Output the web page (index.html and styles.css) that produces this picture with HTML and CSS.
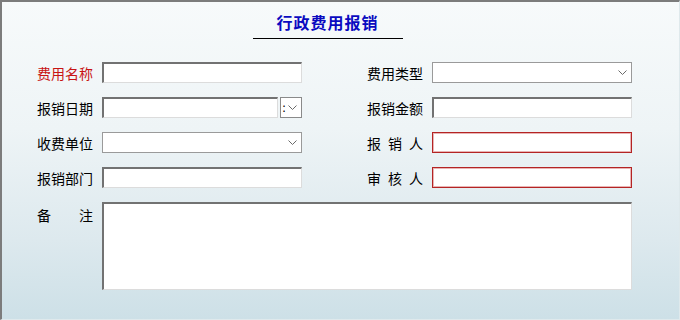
FILE: index.html
```html
<!DOCTYPE html>
<html lang="zh-CN">
<head>
  <meta charset="UTF-8" />
  <title>行政费用报销</title>
  <link rel="stylesheet" href="styles.css">
</head>
<body>
  <div class="panel">
    <div class="title-wrap">
      <h1 class="page-title">行政费用报销</h1>
    </div>

    <form class="expense-form">
      <label class="field-label required">费用名称</label>
      <input type="text" class="text-input" />
      <label class="field-label right">费用类型</label>
      <div class="select-box">
        <svg class="chevron" width="9" height="6" viewBox="0 0 9 6"><path d="M0.5 0.5 L4.5 4.5 L8.5 0.5" fill="none" stroke="#6a6a6a" stroke-width="1"/></svg>
      </div>

      <label class="field-label">报销日期</label>
      <div class="date-field">
        <input type="text" class="text-input date-input" />
        <div class="date-btn">
          <span class="colon">:</span>
          <svg width="9" height="6" viewBox="0 0 9 6"><path d="M0.5 0.5 L4.5 4.5 L8.5 0.5" fill="none" stroke="#6a6a6a" stroke-width="1"/></svg>
        </div>
      </div>
      <label class="field-label right">报销金额</label>
      <input type="text" class="text-input" />

      <label class="field-label">收费单位</label>
      <div class="select-box">
        <svg class="chevron" width="9" height="6" viewBox="0 0 9 6"><path d="M0.5 0.5 L4.5 4.5 L8.5 0.5" fill="none" stroke="#6a6a6a" stroke-width="1"/></svg>
      </div>
      <label class="field-label right spread">报销人</label>
      <input type="text" class="text-input must" />

      <label class="field-label">报销部门</label>
      <input type="text" class="text-input" />
      <label class="field-label right spread">审核人</label>
      <input type="text" class="text-input must" />

      <label class="field-label spread note-label">备注</label>
      <textarea class="text-input note"></textarea>
    </form>
  </div>
</body>
</html>
```

FILE: styles.css
```css
* {
  box-sizing: border-box;
}

body {
  margin: 0;
  font-family: "Noto Sans CJK SC", "Noto Sans", sans-serif;
  color: #000;
}

.panel {
  width: 680px;
  height: 320px;
  border-top: 2px solid #7c7c7c;
  border-left: 2px solid #7c7c7c;
  border-right: 1px solid #dfe9ec;
  border-bottom: 1px solid #dfe9ec;
  background: linear-gradient(to bottom, #f7fafb 0%, #eef4f6 40%, #dde9ee 75%, #cde0e7 100%);
  padding: 10px 0 0 35px;
}

.title-wrap {
  width: 595px;
  padding-right: 14px;
  display: flex;
  justify-content: center;
}

.page-title {
  margin: 0;
  width: 150px;
  font-size: 16px;
  line-height: 20px;
  font-weight: bold;
  letter-spacing: 1px;
  color: #0a0ac0;
  text-align: center;
  padding-bottom: 6px;
  border-bottom: 1px solid #000;
}

.expense-form {
  margin-top: 23px;
  display: grid;
  grid-template-columns: 56px 200px 112px 200px;
  grid-auto-rows: 21px;
  column-gap: 9px;
  row-gap: 14px;
}

.field-label {
  font-size: 14px;
  line-height: 21px;
  padding-top: 1px;
  white-space: nowrap;
}

.field-label.required {
  color: #c81414;
}

.field-label.right {
  justify-self: end;
  width: 56px;
}

.field-label.spread {
  text-align: justify;
  text-align-last: justify;
}

.text-input {
  width: 100%;
  height: 21px;
  margin: 0;
  background: #fff;
  border-top: 2px solid #727272;
  border-left: 2px solid #727272;
  border-right: 1px solid #dcdcdc;
  border-bottom: 1px solid #dcdcdc;
  border-radius: 0;
  outline: none;
  font: inherit;
}

.text-input.must {
  border: 1px solid #b42424;
  box-shadow: inset 0 0 0 1px #e9b4b4;
}

.select-box {
  height: 21px;
  background: #fff;
  border: 1px solid #9a9a9a;
  display: flex;
  align-items: center;
  justify-content: flex-end;
  padding-right: 4px;
}

.date-field {
  display: flex;
  gap: 2px;
}

.date-input {
  width: 176px;
}

.date-btn {
  width: 22px;
  height: 21px;
  background: #fff;
  border: 1px solid #8a8a8a;
  display: flex;
  align-items: center;
  padding-left: 1px;
  gap: 2px;
}

.colon {
  font-size: 12px;
  line-height: 12px;
  font-family: "DejaVu Sans", sans-serif;
}

.note-label {
  align-self: start;
  line-height: 20px;
  padding-top: 3px;
}

.note {
  grid-column: 2 / 5;
  height: 88px;
  resize: none;
}
```
